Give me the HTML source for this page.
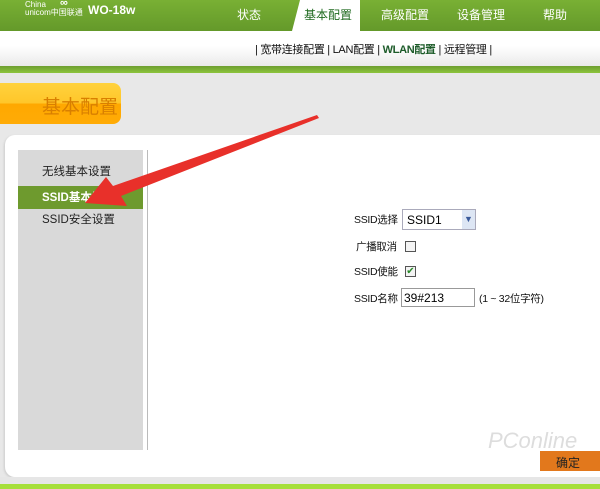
<!DOCTYPE html>
<html><head><meta charset="utf-8"><style>
*{margin:0;padding:0;box-sizing:border-box}
body{width:600px;height:489px;overflow:hidden;background:#e8e8e8;font-family:"Liberation Sans","Noto Sans CJK SC",sans-serif;font-size:12px;position:relative}
.abs{position:absolute}
.top{left:0;top:0;width:600px;height:31px;background:linear-gradient(#79b034,#64992a);}
.nav span{position:absolute;top:6px;color:#fff;font-size:12px}
.sub{left:0;top:31px;width:600px;height:36px;background:linear-gradient(#fff 40%,#e9e9e9)}
.gl{left:0;top:66px;width:600px;height:7px;background:linear-gradient(#6d9e30,#8cc43c)}
.tab{left:0;top:83px;width:121px;height:41px;border-radius:0 8px 8px 0;background:linear-gradient(#ffd23e 0,#ffc629 50%,#ffa800 50%,#ffab06);color:#d97f00;font-size:19px;padding:9px 0 0 42px}
.panel{left:5px;top:135px;width:600px;height:342px;background:#fff;border-radius:10px 0 0 10px;box-shadow:-1px 1px 2px #ccc}
.side{left:18px;top:150px;width:125px;height:300px;background:#d9d9d9}
.sep{left:147px;top:150px;width:1px;height:300px;background:#bbb}
.side div{position:absolute;left:24px;font-size:11.5px;color:#222}
.lbl{font-size:10.5px;color:#111;letter-spacing:-0.3px}
</style></head><body>
<div class="abs top"></div>
<div class="abs" style="left:25px;top:1px;color:#fff;font-size:8px;line-height:8px">China<br>unicom中国联通</div>
<div class="abs" style="left:60px;top:-3px;color:#fff;font-size:11px;font-weight:bold">∞</div>
<div class="abs" style="left:88px;top:3px;color:#fff;font-size:12px;font-weight:bold">WO-18w</div>
<div class="abs" style="left:292px;top:0;width:68px;height:31px;background:#fff;clip-path:polygon(8px 0,100% 0,100% 100%,0 100%);"></div>
<div class="nav">
<span style="left:237px">状态</span>
<span style="left:304px;color:#1f6a1f">基本配置</span>
<span style="left:381px">高级配置</span>
<span style="left:457px">设备管理</span>
<span style="left:543px">帮助</span>
</div>
<div class="abs sub"></div>
<div class="abs" style="left:255px;top:41px;font-size:11px;letter-spacing:-0.3px;color:#111">| 宽带连接配置 | LAN配置 | <b style="color:#1d5c2a">WLAN配置</b> | 远程管理 |</div>
<div class="abs gl"></div>
<div class="abs tab">基本配置</div>
<div class="abs panel"></div>
<div class="abs side">
<div style="top:13px">无线基本设置</div>
<div style="top:36px;left:0;width:125px;height:23px;background:#6e9a2e"></div>
<div style="top:39px;color:#fff;font-weight:bold">SSID基本设置</div>
<div style="top:61px">SSID安全设置</div>
</div>
<div class="abs sep"></div>
<div class="abs lbl" style="left:354px;top:212px">SSID选择</div>
<div class="abs" style="left:402px;top:209px;width:74px;height:21px;border:1px solid #aab;background:#fff;font-size:12px;padding:3px 4px">SSID1</div>
<div class="abs" style="left:462px;top:210px;width:13px;height:19px;background:#dde6f4;color:#3a5a9a;font-size:9px;text-align:center;line-height:18px">▼</div>
<div class="abs lbl" style="left:356px;top:239px">广播取消</div>
<div class="abs" style="left:405px;top:241px;width:11px;height:11px;border:1px solid #555;background:#f4f4f4"></div>
<div class="abs lbl" style="left:354px;top:264px">SSID使能</div>
<div class="abs" style="left:405px;top:266px;width:11px;height:11px;border:1px solid #555;background:#f4f4f4;color:#2a8a2a;font-size:10px;line-height:9px;text-align:center">✔</div>
<div class="abs lbl" style="left:354px;top:291px">SSID名称</div>
<div class="abs" style="left:401px;top:288px;width:74px;height:19px;border:1px solid #999;background:#fff;font-size:12px;padding:2px 2px">39#213</div>
<div class="abs lbl" style="left:479px;top:291px">(1 ~ 32位字符)</div>
<div class="abs" style="left:540px;top:451px;width:60px;height:20px;background:#e2781c;color:#222;font-size:12px;padding:3px 0 0 16px">确定</div>
<div class="abs" style="left:488px;top:428px;color:#ddd;font-size:22px;font-style:italic">PConline</div>
<div class="abs" style="left:0;top:477px;width:600px;height:7px;background:#e6e6e6"></div>
<div class="abs" style="left:0;top:484px;width:600px;height:5px;background:#a6df3a"></div>
<svg class="abs" style="left:0;top:0" width="600" height="489"><polygon points="317,115 113,186 106,177 85,203 127,206 121,196 319,118" fill="#e8302a"/></svg>
</body></html>
